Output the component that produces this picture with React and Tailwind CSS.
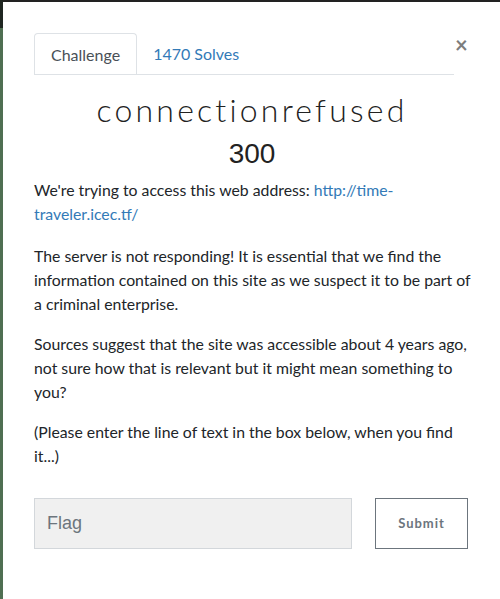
export default function App() {
  return (
    <div className="flex h-[599px] w-[500px] overflow-hidden bg-white font-['Lato',sans-serif] text-[#212529]">
      {/* backdrop edge */}
      <div className="flex w-[3px] flex-col">
        <div className="h-[28px] bg-[#1f2621]"></div>
        <div className="flex-1 bg-[#4f6f52]"></div>
      </div>

      <div className="flex flex-1 flex-col">
        <div className="h-[2px] bg-[#222]"></div>

        <div className="flex flex-col pl-[31px] pr-[26px] pt-[31px]">
          {/* Tabs */}
          <div className="mr-[6px] flex items-start">
            <ul className="flex flex-1 border-b border-[#dee2e6] text-[16px]">
              <li className="-mb-px h-[41px] rounded-t border border-b-0 border-[#dee2e6] bg-white px-4 leading-[41px] text-[#495057]">
                Challenge
              </li>
              <li className="h-[41px] px-4 leading-[41px] text-[#337ab7]">1470 Solves</li>
            </ul>
            <button className="ml-[1px] mt-[1px] w-[13px] text-[22px] font-bold leading-[22px] text-[#7d7d7d]">
              ×
            </button>
          </div>

          {/* Title */}
          <h2 className="mr-[4px] mt-[15px] text-center text-[32px] font-light leading-[40px] tracking-[3.2px] text-[#222]">
            connectionrefused
          </h2>
          <h3 className="mr-[4px] mt-[7px] text-center font-['Liberation_Sans',sans-serif] text-[28px] leading-[34px] text-[#222]">
            300
          </h3>

          {/* Description */}
          <div className="mt-[7px] text-[15.8px] leading-[24px]">
            <p>
              We're trying to access this web address:{" "}
              <a className="text-[#337ab7]">http://time-traveler.icec.tf/</a>
            </p>
            <p className="mt-[18px]">
              The server is not responding! It is essential that we find the information contained on this
              site as we suspect it to be part of a criminal enterprise.
            </p>
            <p className="mt-[16px]">
              Sources suggest that the site was accessible about 4 years ago, not sure how that is relevant but
              it might mean something to you?
            </p>
            <p className="mt-[16px]">(Please enter the line of text in the box below, when you find it...)</p>
          </div>

          {/* Flag form */}
          <div className="mr-[6px] mt-[30px] flex items-start">
            <input
              placeholder="Flag"
              className="h-[51px] w-[318px] border border-[#d3d7db] bg-[#f0f0f0] px-[12px] font-['Liberation_Sans',sans-serif] text-[18px] text-[#495057] placeholder:text-[#6c757d] outline-none"
            />
            <button className="ml-[23px] h-[51px] flex-1 border border-[#6c757d] bg-white text-[13px] font-bold tracking-[1px] text-[#6c757d]">
              Submit
            </button>
          </div>
        </div>
      </div>
    </div>
  );
}
